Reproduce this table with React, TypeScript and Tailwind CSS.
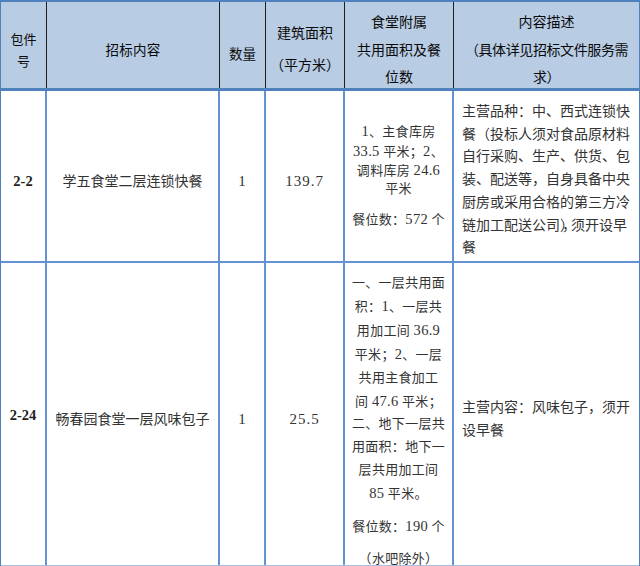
function N({ children }: { children: React.ReactNode }) {
  return <span className="text-[14.5px]">{children}</span>;
}

export default function App() {
  const hCell =
    "shrink-0 border-r border-[#1f1f1f] flex flex-col items-center text-center";
  const bCell =
    "shrink-0 border-r-2 border-[#6493d4] flex flex-col items-center text-center";
  return (
    <div className="w-[640px] h-[566px] bg-white overflow-hidden font-['Liberation_Serif','Noto_Sans_CJK_SC',serif] text-[#333]">
      <div className="border-t-2 border-l border-r border-[#4f81bd]">
        {/* header */}
        <div className="flex h-[89px] bg-[#b8cce4] border-b-[3px] border-[#4f81bd] text-[#0a0a0a] font-normal">
          <div className={`${hCell} w-[46px] justify-center pt-[11px] text-[13px] leading-[22px]`}>
            <div>包件</div>
            <div>号</div>
          </div>
          <div className={`${hCell} w-[173px] justify-center pt-[11px] text-[13.5px] leading-[22px] tracking-[0.3px]`}>
            招标内容
          </div>
          <div className={`${hCell} w-[46px] justify-center pt-[20px] text-[13.5px] leading-[22px]`}>
            数量
          </div>
          <div className={`${hCell} w-[79px] justify-center pt-[9px] text-[14px] leading-[32px]`}>
            <div>建筑面积</div>
            <div>（平方米）</div>
          </div>
          <div className={`${hCell} w-[109px] justify-start pt-[8px] text-[14px]`}>
            <div className="leading-[26px]">食堂附属</div>
            <div className="mt-[2px] leading-[26.6px]">
              共用面积及餐
              <br />
              位数
            </div>
          </div>
          <div className="flex-1 flex flex-col items-center text-center justify-start pt-[8px] text-[14px]">
            <div className="leading-[26px]">内容描述</div>
            <div className="mt-[2px] leading-[26.6px] tracking-[-0.4px]">
              （具体详见招标文件服务需
              <br />
              求）
            </div>
          </div>
        </div>

        {/* row 1 */}
        <div className="flex h-[172px] border-b-2 border-[#6493d4]">
          <div className={`${bCell} w-[46px] justify-center pt-[11px] text-[14.5px] font-bold text-[#222]`}>
            2-2
          </div>
          <div className={`${bCell} w-[173px] justify-center pt-[11px] text-[14px]`}>
            学五食堂二层连锁快餐
          </div>
          <div className={`${bCell} w-[46px] justify-center pt-[11px] text-[15px]`}>
            1
          </div>
          <div className={`${bCell} w-[79px] justify-center pt-[11px] text-[15px] tracking-[1px]`}>
            139.7
          </div>
          <div className={`${bCell} w-[109px] justify-center text-[13px] tracking-[0.3px] whitespace-nowrap`}>
            <div className="leading-[18.3px]">
              <div><N>1</N>、主食库房</div>
              <div><N>33.5</N> 平米；<N>2</N>、</div>
              <div>调料库房 <N>24.6</N></div>
              <div>平米</div>
            </div>
            <div className="mt-[11.7px] leading-[18.3px]">餐位数：<N>572</N> 个</div>
          </div>
          <div className="flex-1 flex flex-col items-start justify-start pt-[10px] pl-[8px] text-[14px] leading-[22.7px] whitespace-nowrap">
            <div>主营品种：中、西式连锁快</div>
            <div>餐（投标人须对食品原材料</div>
            <div>自行采购、生产、供货、包</div>
            <div>装、配送等，自身具备中央</div>
            <div>厨房或采用合格的第三方冷</div>
            <div>
              链加工配送公司<span className="tracking-[-5px]">），</span>须开设早
            </div>
            <div>餐</div>
          </div>
        </div>

        {/* row 2 */}
        <div className="flex h-[303px] border-b border-[#a8c0e4]">
          <div className={`${bCell} w-[46px] justify-center pt-[3px] text-[14.5px] font-bold text-[#222]`}>
            2-24
          </div>
          <div className={`${bCell} w-[173px] justify-center pt-[11px] text-[14px]`}>
            畅春园食堂一层风味包子
          </div>
          <div className={`${bCell} w-[46px] justify-center pt-[11px] text-[15px]`}>
            1
          </div>
          <div className={`${bCell} w-[79px] justify-center pt-[11px] text-[15px] tracking-[1px]`}>
            25.5
          </div>
          <div className={`${bCell} w-[109px] justify-start pt-[9px] text-[13px] tracking-[0.3px] whitespace-nowrap`}>
            <div className="leading-[22.9px]">
              <div>一、一层共用面</div>
              <div>积：<N>1</N>、一层共</div>
              <div>用加工间 <N>36.9</N></div>
              <div>平米；<N>2</N>、一层</div>
              <div>共用主食加工</div>
              <div>间 <N>47.6</N> 平米；</div>
              <div>二、地下一层共</div>
              <div>用面积：地下一</div>
              <div>层共用加工间</div>
              <div><N>85</N> 平米。</div>
            </div>
            <div className="mt-[9px] leading-[22.9px]">餐位数：<N>190</N> 个</div>
            <div className="mt-[9px] leading-[22.9px]">（水吧除外）</div>
          </div>
          <div className="flex-1 flex flex-col items-start justify-center pt-[9px] pl-[8px] text-[14px] leading-[23px] whitespace-nowrap">
            <div>主营内容：风味包子，须开</div>
            <div>设早餐</div>
          </div>
        </div>
      </div>
    </div>
  );
}
